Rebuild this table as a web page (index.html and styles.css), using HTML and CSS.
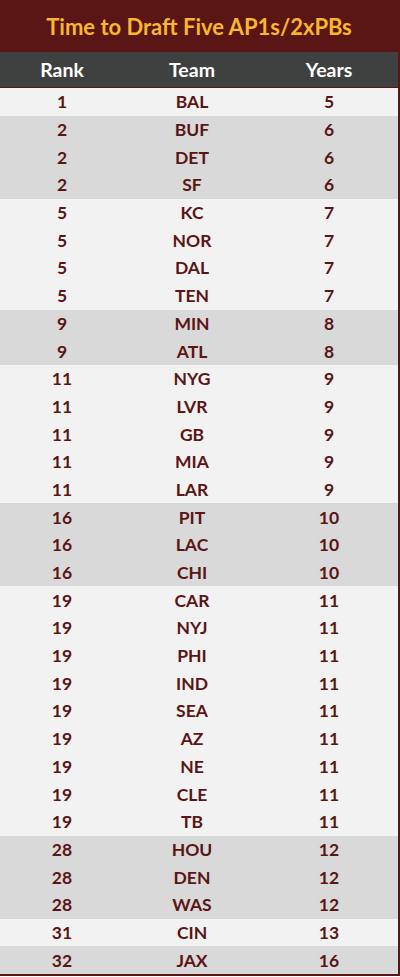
FILE: index.html
```html
<!DOCTYPE html>
<html>
<head>
<meta charset="utf-8">
<link rel="stylesheet" href="styles.css">
</head>
<body>
<div class="sheet">
  <div class="title">Time to Draft Five AP1s/2xPBs</div>
  <div class="row head"><span>Rank</span><span>Team</span><span>Years</span></div>
  <div class="rows">
    <div class="row light"><span>1</span><span>BAL</span><span>5</span></div>
    <div class="row dark"><span>2</span><span>BUF</span><span>6</span></div>
    <div class="row dark"><span>2</span><span>DET</span><span>6</span></div>
    <div class="row dark"><span>2</span><span>SF</span><span>6</span></div>
    <div class="row light"><span>5</span><span>KC</span><span>7</span></div>
    <div class="row light"><span>5</span><span>NOR</span><span>7</span></div>
    <div class="row light"><span>5</span><span>DAL</span><span>7</span></div>
    <div class="row light"><span>5</span><span>TEN</span><span>7</span></div>
    <div class="row dark"><span>9</span><span>MIN</span><span>8</span></div>
    <div class="row dark"><span>9</span><span>ATL</span><span>8</span></div>
    <div class="row light"><span>11</span><span>NYG</span><span>9</span></div>
    <div class="row light"><span>11</span><span>LVR</span><span>9</span></div>
    <div class="row light"><span>11</span><span>GB</span><span>9</span></div>
    <div class="row light"><span>11</span><span>MIA</span><span>9</span></div>
    <div class="row light"><span>11</span><span>LAR</span><span>9</span></div>
    <div class="row dark"><span>16</span><span>PIT</span><span>10</span></div>
    <div class="row dark"><span>16</span><span>LAC</span><span>10</span></div>
    <div class="row dark"><span>16</span><span>CHI</span><span>10</span></div>
    <div class="row light"><span>19</span><span>CAR</span><span>11</span></div>
    <div class="row light"><span>19</span><span>NYJ</span><span>11</span></div>
    <div class="row light"><span>19</span><span>PHI</span><span>11</span></div>
    <div class="row light"><span>19</span><span>IND</span><span>11</span></div>
    <div class="row light"><span>19</span><span>SEA</span><span>11</span></div>
    <div class="row light"><span>19</span><span>AZ</span><span>11</span></div>
    <div class="row light"><span>19</span><span>NE</span><span>11</span></div>
    <div class="row light"><span>19</span><span>CLE</span><span>11</span></div>
    <div class="row light"><span>19</span><span>TB</span><span>11</span></div>
    <div class="row dark"><span>28</span><span>HOU</span><span>12</span></div>
    <div class="row dark"><span>28</span><span>DEN</span><span>12</span></div>
    <div class="row dark"><span>28</span><span>WAS</span><span>12</span></div>
    <div class="row light"><span>31</span><span>CIN</span><span>13</span></div>
    <div class="row dark"><span>32</span><span>JAX</span><span>16</span></div>
  </div>
</div>
</body>
</html>
```

FILE: styles.css
```css
html, body {
  margin: 0;
  padding: 0;
  background: #ffffff;
}
.sheet {
  width: 398px;
  border-right: 2px solid #5a1515;
  border-bottom: 2px solid #5a1515;
  font-family: Lato, "Open Sans", sans-serif;
  font-weight: 700;
}
.title {
  height: 52px;
  background: #5a1515;
  color: #f8b72e;
  font-size: 22px;
  line-height: 53px;
  text-align: center;
}
.row {
  display: grid;
  grid-template-columns: 124px 136px 138px;
  align-items: center;
  text-align: center;
}
.head {
  height: 35px;
  background: #3f4040;
  color: #ffffff;
  font-size: 19.5px;
  border-bottom: 1px solid #5a1515;
}
.rows .row {
  height: 27.7px;
  color: #5a1515;
  font-size: 17.5px;
}
.light { background: #f2f2f2; }
.dark { background: #d9d9d9; }
```
